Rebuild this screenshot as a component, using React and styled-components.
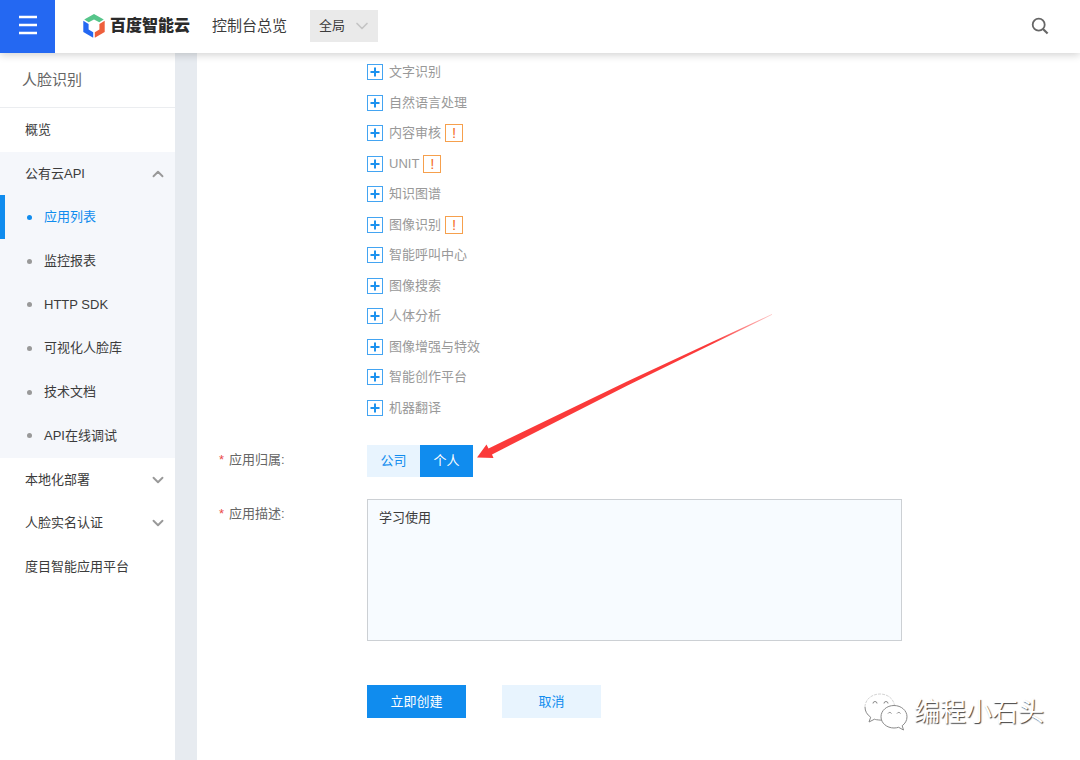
import React, { useState } from 'react';
import styled, { createGlobalStyle } from 'styled-components';
import { ChevronDown, ChevronUp } from 'lucide-react';

const colors = {
  primary: '#108cee',
  brand: '#2468f2',
  text: '#3c3c3c',
  muted: '#999',
  pale: '#e8f4fe',
  group: '#f5f7fb',
};

const GlobalStyle = createGlobalStyle`
  * {
    box-sizing: border-box;
  }
  body {
    margin: 0;
    background: #fff;
    color: ${colors.text};
    font-size: 13px;
    line-height: 20px;
  }
  body, button, select, textarea {
    font-family: 'Liberation Sans', 'Noto Sans CJK SC', sans-serif;
  }
  button {
    border: 0;
    padding: 0;
    background: none;
    font-size: 13px;
    line-height: 20px;
    cursor: pointer;
  }
  a {
    color: inherit;
    text-decoration: none;
  }
  ul {
    margin: 0;
    padding: 0;
    list-style: none;
  }
`;

const Page = styled.div`
  display: flex;
  flex-direction: column;
  min-height: 100vh;
  position: relative;
`;

const TopBar = styled.header`
  display: flex;
  align-items: center;
  height: 53px;
  padding: 0 31px 2px 0;
  background: #fff;
  box-shadow: 0 2px 8px rgba(0, 0, 0, 0.18);
  position: relative;
  z-index: 1;
`;

const MenuButton = styled.button`
  display: flex;
  align-items: center;
  justify-content: center;
  align-self: flex-start;
  flex: none;
  width: 55px;
  height: 53px;
  padding-bottom: 3px;
  background: ${colors.brand};
`;

const LogoLink = styled.a`
  display: flex;
  align-items: center;
  gap: 5px;
  margin-left: 28px;
  color: #2b2b2b;
  font-size: 16px;
  font-weight: 900;
`;

const ConsoleLink = styled.a`
  margin-left: 22px;
  font-size: 15px;
`;

const Region = styled.div`
  display: flex;
  align-items: center;
  margin-left: 23px;
  position: relative;
  svg {
    position: absolute;
    right: 6px;
    pointer-events: none;
  }
`;

const RegionSelect = styled.select`
  appearance: none;
  width: 68px;
  height: 32px;
  padding: 0 9px;
  border: 0;
  border-radius: 0;
  background: #eaeaea;
  color: ${colors.text};
  font-size: 13px;
`;

const SearchButton = styled.button`
  display: flex;
  margin-left: auto;
`;

const Body = styled.div`
  display: flex;
  flex: 1;
`;

const SideBar = styled.aside`
  flex: none;
  width: 175px;
`;

const SideTitle = styled.h2`
  display: flex;
  align-items: center;
  height: 55px;
  margin: 0;
  padding-left: 22px;
  border-bottom: 1px solid #ebedf0;
  color: #666;
  font-size: 15px;
  font-weight: 400;
`;

const Nav = styled.nav`
  display: grid;
  grid-template-rows: repeat(11, 1fr);
  height: 481px;
`;

const NavGroup = styled.div`
  display: grid;
  grid-row: span 7;
  grid-template-rows: repeat(7, 1fr);
  background: ${colors.group};
`;

const NavItem = styled.a`
  display: flex;
  align-items: center;
  justify-content: space-between;
  padding: 0 8px 0 25px;
`;

const SubItem = styled.a`
  display: flex;
  align-items: center;
  gap: 12px;
  padding-left: 22px;
  border-left: 5px solid ${props => (props.$active ? colors.primary : 'transparent')};
  color: ${props => (props.$active ? colors.primary : colors.text)};
  &::before {
    content: '';
    width: 5px;
    height: 5px;
    border-radius: 5px;
    background: ${props => (props.$active ? colors.primary : colors.muted)};
  }
`;

const Main = styled.main`
  flex: 1;
  padding: 4px 22px 42px;
  border-left: 22px solid #e7ebf0;
`;

const Form = styled.form`
  display: grid;
  grid-template-columns: 148px minmax(0, 535px);
  row-gap: 22px;
`;

const ServiceList = styled.ul`
  display: grid;
  grid-template-rows: repeat(12, 1fr);
  grid-column: 2;
  height: 366px;
`;

const Service = styled.li`
  display: flex;
  align-items: center;
  gap: 4px;
`;

const Expand = styled.button`
  display: flex;
  align-items: center;
  gap: 6px;
  color: ${colors.muted};
`;

const Warn = styled.span`
  width: 18px;
  height: 18px;
  border: 1px solid #f6a04d;
  color: #f5702a;
  font-size: 15px;
  line-height: 16px;
  text-align: center;
`;

const Label = styled.label`
  padding-top: 5px;
  color: #666;
  &::before {
    content: '*';
    margin-right: 5px;
    color: #ea4a4a;
  }
`;

const Segmented = styled.div`
  display: flex;
  justify-self: start;
  position: relative;
`;

const Segment = styled.button`
  width: 53px;
  height: 32px;
  background: ${props => (props.$active ? colors.primary : colors.pale)};
  color: ${props => (props.$active ? '#fff' : colors.primary)};
`;

const ArrowDrawing = styled.svg`
  position: absolute;
  left: 110px;
  bottom: 18px;
  pointer-events: none;
`;

const TextArea = styled.textarea`
  display: block;
  width: 100%;
  height: 142px;
  padding: 8px 11px;
  border: 1px solid #ccd0d4;
  border-radius: 0;
  background: #f7fbff;
  color: ${colors.text};
  font-size: 13px;
  line-height: 20px;
  resize: none;
`;

const Actions = styled.div`
  display: flex;
  grid-column: 2;
  gap: 36px;
  padding-top: 22px;
`;

const Button = styled.button`
  width: 99px;
  height: 33px;
  background: ${props => (props.$primary ? colors.primary : colors.pale)};
  color: ${props => (props.$primary ? '#fff' : colors.primary)};
`;

const Signature = styled.div`
  display: flex;
  align-items: center;
  gap: 6px;
  position: absolute;
  right: 36px;
  bottom: 29px;
  color: #fff;
  font-size: 26px;
  line-height: 36px;
  text-shadow: 1px 1px 1px #444;
`;

const apiLinks = [
  '应用列表',
  '监控报表',
  'HTTP SDK',
  '可视化人脸库',
  '技术文档',
  'API在线调试',
];

const services = [
  { name: '文字识别' },
  { name: '自然语言处理' },
  { name: '内容审核', warn: true },
  { name: 'UNIT', warn: true },
  { name: '知识图谱' },
  { name: '图像识别', warn: true },
  { name: '智能呼叫中心' },
  { name: '图像搜索' },
  { name: '人体分析' },
  { name: '图像增强与特效' },
  { name: '智能创作平台' },
  { name: '机器翻译' },
];

function Logo() {
  return (
    <LogoLink href="#home">
      <svg width="22" height="24" viewBox="0 0 22 24" aria-hidden="true">
        <path d="M11 0 L20.8 5.500 L16.300 8.300 L11 5.400 L5.700 8.300 L1.200 5.500 Z" fill="#56c58a" />
        <path d="M0.300 6.800 L5.600 9.900 V15.400 L10.200 18.200 V23.800 L0.300 18 Z" fill="#2468f2" />
        <path d="M21.700 6.800 L16.400 9.900 V15.400 L11.800 18.200 V23.800 L21.700 18 Z" fill="#ee5f3c" />
      </svg>
      <span>百度智能云</span>
    </LogoLink>
  );
}

function Header() {
  return (
    <TopBar>
      <MenuButton aria-label="菜单">
        <svg width="20" height="20" viewBox="0 0 20 20" aria-hidden="true">
          <path d="M1 2H19M1 10H19M1 18H19" stroke="#fff" strokeWidth="2.4" />
        </svg>
      </MenuButton>
      <Logo />
      <ConsoleLink href="#console">控制台总览</ConsoleLink>
      <Region>
        <RegionSelect aria-label="区域" defaultValue="all">
          <option value="all">全局</option>
        </RegionSelect>
        <ChevronDown size={20} strokeWidth={2} color="#c4c4c4" />
      </Region>
      <SearchButton aria-label="搜索">
        <svg width="18" height="18" viewBox="0 0 18 18" fill="none" aria-hidden="true">
          <circle cx="7.7" cy="7.7" r="6" stroke="#666" strokeWidth="1.8" />
          <path d="M12 12L16.600 16.500" stroke="#666" strokeWidth="2.2" />
        </svg>
      </SearchButton>
    </TopBar>
  );
}

function Navigation() {
  const [active, setActive] = useState('应用列表');
  return (
    <SideBar>
      <SideTitle>人脸识别</SideTitle>
      <Nav>
        <NavItem href="#overview">概览</NavItem>
        <NavGroup>
          <NavItem href="#api">
            公有云API
            <ChevronUp size={18} strokeWidth={2.5} color={colors.muted} />
          </NavItem>
          {apiLinks.map(name => (
            <SubItem
              key={name}
              href="#api"
              $active={name === active}
              onClick={() => setActive(name)}
            >
              {name}
            </SubItem>
          ))}
        </NavGroup>
        <NavItem href="#local">
          本地化部署
          <ChevronDown size={18} strokeWidth={2.5} color={colors.muted} />
        </NavItem>
        <NavItem href="#verify">
          人脸实名认证
          <ChevronDown size={18} strokeWidth={2.5} color={colors.muted} />
        </NavItem>
        <NavItem href="#platform">度目智能应用平台</NavItem>
      </Nav>
    </SideBar>
  );
}

function ServiceItem({ name, warn }) {
  return (
    <Service>
      <Expand type="button">
        <svg width="16" height="16" viewBox="0 0 16 16" fill="none" aria-hidden="true">
          <rect x="0.5" y="0.5" width="15" height="15" stroke="#43a4f2" />
          <path d="M3.500 8H12.500M8 3.500V12.500" stroke="#1c92ef" strokeWidth="2" />
        </svg>
        {name}
      </Expand>
      {warn && <Warn>!</Warn>}
    </Service>
  );
}

function Arrow() {
  return (
    <ArrowDrawing width="296" height="145" viewBox="0 0 296 145" aria-hidden="true">
      <defs>
        <linearGradient id="fade" x1="0" y1="0" x2="1" y2="0">
          <stop offset="0.8" stopColor="#fb3a3a" />
          <stop offset="1" stopColor="#fb3a3a" stopOpacity="0.3" />
        </linearGradient>
      </defs>
      <path
        d="M0 143.500 L9.500 130.500 L11.500 134.500 L150 67.500 L295 0 L295 0.800 L151 71.300 L15 140.500 L16.500 144 Z"
        fill="url(#fade)"
      />
    </ArrowDrawing>
  );
}

function Watermark() {
  return (
    <Signature>
      <svg width="44" height="38" viewBox="0 0 44 38" fill="none" aria-hidden="true">
        <g stroke="#8a8a8a">
          <path
            d="M22 27C20 27.500 12 27 10.500 26.200L5 29L6.700 24.200C3 21.700 1 18.200 1 14"
            fill="#fff"
          />
          <path
            d="M1 14C1 6.700 7.500 1 16 1C23.500 1 29.500 5.500 30.500 12.500"
            stroke="#d4d4d4"
            strokeDasharray="3 1"
          />
          <path
            d="M30 12.500c-7.200 0-13 5-13 11.300S22.800 35 30 35c1.600 0 3.200-.3 4.600-.7L39.500 37l-1.300-4.300c3-2.100 4.800-5.300 4.800-8.900 0-6.300-5.800-11.300-13-11.300z"
            fill="#fff"
          />
          <path d="M9 10.500a2 2 0 0 1 4 0M20 10.500a2 2 0 0 1 4 0M24 20.500a2 2 0 0 1 3.500 0M33 20.500a2 2 0 0 1 3.500 0" />
        </g>
      </svg>
      编程小石头
    </Signature>
  );
}

function CreateForm() {
  const [owner, setOwner] = useState('个人');
  return (
    <Form onSubmit={e => e.preventDefault()}>
      <ServiceList>
        {services.map(service => (
          <ServiceItem key={service.name} {...service} />
        ))}
      </ServiceList>
      <Label as="span" id="owner">应用归属:</Label>
      <Segmented role="group" aria-labelledby="owner">
        {['公司', '个人'].map(name => (
          <Segment
            key={name}
            type="button"
            aria-pressed={owner === name}
            $active={owner === name}
            onClick={() => setOwner(name)}
          >
            {name}
          </Segment>
        ))}
        <Arrow />
      </Segmented>
      <Label htmlFor="description">应用描述:</Label>
      <TextArea id="description" defaultValue="学习使用" />
      <Actions>
        <Button type="submit" $primary>立即创建</Button>
        <Button type="button">取消</Button>
      </Actions>
    </Form>
  );
}

function App() {
  return (
    <>
      <GlobalStyle />
      <Page>
        <Header />
        <Body>
          <Navigation />
          <Main>
            <CreateForm />
          </Main>
        </Body>
        <Watermark />
      </Page>
    </>
  );
}

export default App;
